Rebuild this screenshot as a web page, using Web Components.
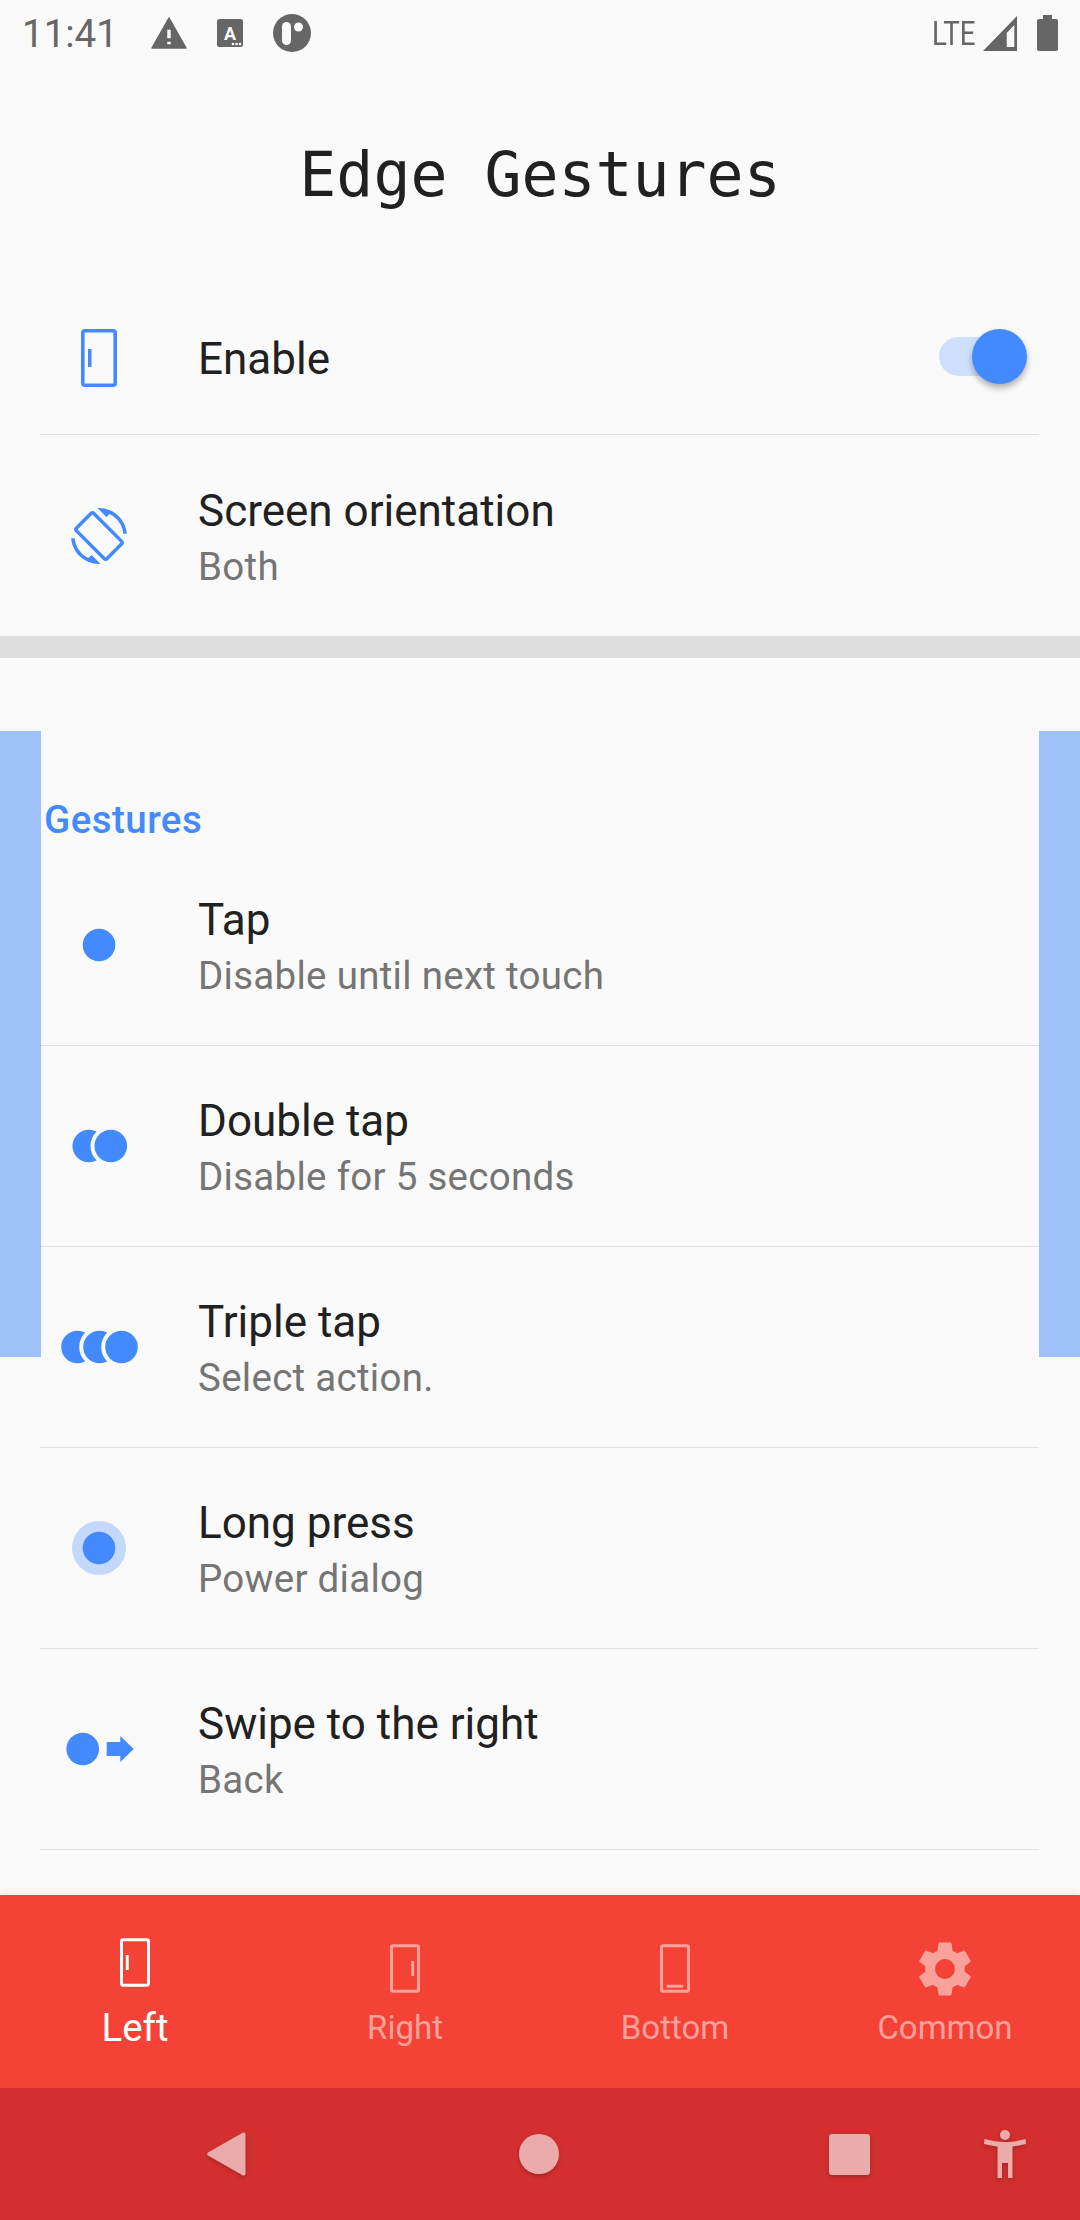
<!DOCTYPE html>
<html>
<head>
<meta charset="utf-8">
<title>Edge Gestures</title>
<style>
  html, body { margin: 0; padding: 0; }
  body {
    width: 1080px;
    height: 2220px;
    overflow: hidden;
    background: #fafafa;
    font-family: Roboto, "Liberation Sans", sans-serif;
    display: flex;
    flex-direction: column;
  }
</style>
</head>
<body>
  <status-bar></status-bar>

  <settings-page>
    <app-title>Edge Gestures</app-title>

    <setting-row label="Enable" compact divider>
      <edge-icon slot="icon" side="left"></edge-icon>
      <toggle-switch slot="trailing"></toggle-switch>
    </setting-row>
    <setting-row label="Screen orientation" summary="Both">
      <svg slot="icon" width="56" height="56" viewBox="0 0 24 24" fill="#448aff"><path d="M16.48 2.52c3.27 1.55 5.61 4.72 5.97 8.48h1.5C23.44 4.84 18.29 0 12 0l-.66.03 3.81 3.81 1.33-1.32zm-6.25-.77c-.59-.59-1.54-.59-2.12 0L1.75 8.11c-.59.59-.59 1.54 0 2.12l12.02 12.02c.59.59 1.54.59 2.12 0l6.36-6.36c.59-.59.59-1.54 0-2.12L10.23 1.75zm4.6 19.44L2.81 9.17l6.36-6.36 12.02 12.02-6.36 6.36zm-7.31.29C4.25 19.94 1.91 16.76 1.55 13H.05C.56 19.16 5.71 24 12 24l.66-.03-3.81-3.81-1.33 1.32z"/></svg>
    </setting-row>

    <section-header>Gestures</section-header>

    <setting-row label="Tap" summary="Disable until next touch" divider>
      <gesture-icon slot="icon" type="tap"></gesture-icon>
    </setting-row>
    <setting-row label="Double tap" summary="Disable for 5 seconds" divider>
      <gesture-icon slot="icon" type="double"></gesture-icon>
    </setting-row>
    <setting-row label="Triple tap" summary="Select action." divider>
      <gesture-icon slot="icon" type="triple"></gesture-icon>
    </setting-row>
    <setting-row label="Long press" summary="Power dialog" divider>
      <gesture-icon slot="icon" type="long"></gesture-icon>
    </setting-row>
    <setting-row label="Swipe to the right" summary="Back" divider>
      <gesture-icon slot="icon" type="swipe"></gesture-icon>
    </setting-row>

    <edge-strip side="left"></edge-strip>
    <edge-strip side="right"></edge-strip>
  </settings-page>

  <bottom-tabs>
    <tab-item label="Left" active><edge-icon side="left" small></edge-icon></tab-item>
    <tab-item label="Right"><edge-icon side="right" small></edge-icon></tab-item>
    <tab-item label="Bottom"><edge-icon side="bottom" small></edge-icon></tab-item>
    <tab-item label="Common">
      <svg width="66" height="66" viewBox="0 0 24 24" fill="#fff" style="margin:-8px -20px"><path d="M19.14 12.94c.04-.3.06-.61.06-.94 0-.32-.02-.64-.07-.94l2.03-1.58c.18-.14.23-.41.12-.61l-1.92-3.32c-.12-.22-.37-.29-.59-.22l-2.39.96c-.5-.38-1.03-.7-1.62-.94l-.36-2.54c-.04-.24-.24-.41-.48-.41h-3.84c-.24 0-.43.17-.47.41l-.36 2.54c-.59.24-1.13.57-1.62.94l-2.39-.96c-.22-.08-.47 0-.59.22L2.74 8.87c-.12.21-.08.47.12.61l2.03 1.58c-.05.3-.09.63-.09.94s.02.64.07.94l-2.03 1.58c-.18.14-.23.41-.12.61l1.92 3.32c.12.22.37.29.59.22l2.39-.96c.5.38 1.03.7 1.62.94l.36 2.54c.05.24.24.41.48.41h3.84c.24 0 .44-.17.47-.41l.36-2.54c.59-.24 1.13-.56 1.62-.94l2.39.96c.22.08.47 0 .59-.22l1.92-3.32c.12-.22.07-.47-.12-.61l-2.01-1.58zM12 15.6c-1.98 0-3.6-1.62-3.6-3.6s1.62-3.6 3.6-3.6 3.6 1.62 3.6 3.6-1.62 3.6-3.6 3.6z"/></svg>
    </tab-item>
  </bottom-tabs>

  <nav-bar></nav-bar>

<script>
class StatusBar extends HTMLElement {
  connectedCallback() {
    this.attachShadow({ mode: 'open' });
    this.shadowRoot.innerHTML = `
      <style>
        :host {
          display: flex;
          flex: none;
          height: 66px;
          align-items: center;
          padding: 0 22px 0 22px;
          color: #666;
          font-size: 38.5px;
        }
        .time { margin-right: 33px; }
        svg { display: block; flex: none; }
        .right { margin-left: auto; display: flex; align-items: center; }
        .lte {
          font-size: 33px;
          width: 44px;
          margin-right: 7px;
          transform: scaleX(.84);
          transform-origin: left center;
          white-space: nowrap;
        }
      </style>
      <span class="time">11:41</span>
      <svg width="36" height="32" viewBox="0 0 36 32" fill="#666" style="margin-right:30px">
        <path fill-rule="evenodd" stroke="#666" stroke-width="1.5" stroke-linejoin="round" d="M18 1 35 31H1ZM15.500 12V22H20.500V12ZM15.500 24V28H20.500V24Z"/>
      </svg>
      <svg width="26" height="28" viewBox="0 0 26 28" style="margin-right:30px">
        <rect width="26" height="28" rx="2.500" fill="#666"/>
        <text x="13" y="21" text-anchor="middle" font-family="Roboto" font-weight="700" font-size="18" fill="#fafafa">A</text>
        <circle cx="16" cy="25" r="1.300" fill="#fafafa"/><circle cx="19.500" cy="25" r="1.300" fill="#fafafa"/><circle cx="23" cy="25" r="1.300" fill="#fafafa"/>
      </svg>
      <svg width="38" height="38" viewBox="0 0 38 38">
        <circle cx="19" cy="19" r="19" fill="#666"/>
        <rect x="9" y="8" width="9" height="23" rx="4.500" fill="#fafafa"/>
        <circle cx="25.500" cy="13" r="4.500" fill="#fafafa"/>
      </svg>
      <div class="right">
        <span class="lte">LTE</span>
        <svg width="34" height="35" viewBox="0 0 34 35" fill="#666" style="margin-right:20px">
          <path fill-rule="evenodd" d="M34 0V35H0ZM23.700 17V31H31.300V9Z"/>
        </svg>
        <svg width="21" height="36" viewBox="0 0 21 36" fill="#666">
          <path d="M6 0H15V4H19Q21 4 21 6V34Q21 36 19 36H2Q0 36 0 34V6Q0 4 2 4H6Z"/>
        </svg>
      </div>
    `;
  }
}

class SettingsPage extends HTMLElement {
  connectedCallback() {
    this.attachShadow({ mode: 'open' });
    this.shadowRoot.innerHTML = `
      <style>
        :host {
          display: flex;
          flex-direction: column;
          flex: none;
          height: 1829px;
          position: relative;
          overflow: hidden;
        }
      </style>
      <slot></slot>
    `;
  }
}

class AppTitle extends HTMLElement {
  connectedCallback() {
    this.attachShadow({ mode: 'open' });
    this.shadowRoot.innerHTML = `
      <style>
        :host {
          display: flex;
          flex: none;
          height: 216px;
          justify-content: center;
          padding-top: 70px;
          box-sizing: border-box;
          font-family: "DejaVu Sans Mono", monospace;
          font-size: 61.5px;
          line-height: 78px;
          color: #212121;
        }
      </style>
      <slot></slot>
    `;
  }
}

class SettingRow extends HTMLElement {
  connectedCallback() {
    const summary = this.getAttribute('summary');
    this.attachShadow({ mode: 'open' });
    this.shadowRoot.innerHTML = `
      <style>
        :host {
          display: flex;
          flex: none;
          align-items: center;
          box-sizing: border-box;
          height: 201px;
          margin: 0 41px 0 40px;
          padding-left: 23px;
        }
        :host([compact]) { height: 153px; }
        :host([divider]) { border-bottom: 1px solid #e0e0e0; }
        .icon {
          flex: none;
          width: 72px;
          height: 72px;
          margin-right: 63px;
          display: flex;
          align-items: center;
          justify-content: center;
        }
        .text { flex: 1; padding-top: 6px; }
        :host([compact]) .text { padding-top: 1px; }
        .label { font-size: 44px; line-height: 56px; color: #212121; }
        .summary { font-size: 38.5px; line-height: 56px; color: #757575; letter-spacing: .28px; }
        ::slotted(svg) { display: block; flex: none; }
      </style>
      <div class="icon"><slot name="icon"></slot></div>
      <div class="text">
        <div class="label">${this.getAttribute('label')}</div>
        ${summary ? `<div class="summary">${summary}</div>` : ''}
      </div>
      <slot name="trailing"></slot>
    `;
  }
}

class SectionHeader extends HTMLElement {
  connectedCallback() {
    this.attachShadow({ mode: 'open' });
    this.shadowRoot.innerHTML = `
      <style>
        :host {
          display: flex;
          flex: none;
          align-items: flex-end;
          box-sizing: border-box;
          height: 209px;
          padding: 0 0 3px 44px;
          border-top: 22px solid #dedede;
          font-size: 38.5px;
          letter-spacing: .45px;
          line-height: 44px;
          font-weight: 500;
          color: #448aff;
        }
      </style>
      <slot></slot>
    `;
  }
}

class ToggleSwitch extends HTMLElement {
  connectedCallback() {
    this.attachShadow({ mode: 'open' });
    this.shadowRoot.innerHTML = `
      <style>
        :host {
          display: block;
          flex: none;
          position: relative;
          width: 71px;
          height: 39px;
          margin: 0 29px 3px 0;
          border-radius: 20px;
          background: #cfe0ff;
        }
        .thumb {
          position: absolute;
          top: -8px;
          right: -17px;
          width: 55px;
          height: 55px;
          border-radius: 50%;
          background: #448aff;
          box-shadow: 0 4px 6px rgba(0,0,0,.3);
        }
      </style>
      <div class="thumb"></div>
    `;
  }
}

class EdgeStrip extends HTMLElement {
  connectedCallback() {
    this.attachShadow({ mode: 'open' });
    this.shadowRoot.innerHTML = `
      <style>
        :host {
          position: absolute;
          top: 665px;
          left: 0;
          width: 41px;
          height: 626px;
          background: rgba(68,138,255,.5);
        }
        :host([side="right"]) { left: auto; right: 0; }
      </style>
    `;
  }
}

// phone outline with a tick on the edge it stands for
class EdgeIcon extends HTMLElement {
  connectedCallback() {
    const small = this.hasAttribute('small');
    const ticks = {
      left: '<rect x="7" y="20" width="3.500" height="18"/>',
      right: '<rect x="25.500" y="20" width="3.500" height="18"/>',
      bottom: '<rect x="8" y="48.500" width="20" height="3.500"/>'
    };
    this.attachShadow({ mode: 'open' });
    this.shadowRoot.innerHTML = `
      <style>
        :host { display: block; flex: none; color: #448aff; line-height: 0; }
        :host([small]) { color: #fff; }
      </style>
      <svg width="${small ? 30 : 36}" height="${small ? 49 : 58}" viewBox="0 0 36 58" fill="currentColor">
        <rect x="1.800" y="1.800" width="32.400" height="54.400" rx="2" fill="none" stroke="currentColor" stroke-width="3.600"/>
        ${ticks[this.getAttribute('side')]}
      </svg>
    `;
  }
}

class GestureIcon extends HTMLElement {
  connectedCallback() {
    const shapes = {
      tap: '<circle cx="36" cy="36" r="16.300"/>',
      double: `<circle cx="25.800" cy="36" r="16.300"/>
        <circle cx="47.800" cy="36" r="16.300" stroke="#fafafa" stroke-width="8" paint-order="stroke"/>`,
      triple: `<circle cx="14.500" cy="36" r="16.300"/>
        <circle cx="36.500" cy="36" r="16.300" stroke="#fafafa" stroke-width="8" paint-order="stroke"/>
        <circle cx="58.500" cy="36" r="16.300" stroke="#fafafa" stroke-width="8" paint-order="stroke"/>`,
      long: `<circle cx="36" cy="36" r="27" opacity=".3"/><circle cx="36" cy="36" r="16.300"/>`,
      swipe: `<circle cx="19.700" cy="36" r="16.300"/>
        <path d="M43.700 29H57.300V23L70.700 36 57.300 49V43H43.700Z"/>`
    };
    this.attachShadow({ mode: 'open' });
    this.shadowRoot.innerHTML = `
      <style>
        :host { display: block; flex: none; width: 72px; height: 72px; }
        svg { display: block; overflow: visible; }
      </style>
      <svg width="72" height="72" viewBox="0 0 72 72" fill="#448aff">${shapes[this.getAttribute('type')]}</svg>
    `;
  }
}

class BottomTabs extends HTMLElement {
  connectedCallback() {
    this.attachShadow({ mode: 'open' });
    this.shadowRoot.innerHTML = `
      <style>
        :host {
          display: grid;
          grid-template-columns: repeat(4, 1fr);
          flex: none;
          height: 193px;
          position: relative;
          background: #f44336;
          box-shadow: 0 -2px 8px rgba(0,0,0,.06);
        }
      </style>
      <slot></slot>
    `;
  }
}

class TabItem extends HTMLElement {
  connectedCallback() {
    this.attachShadow({ mode: 'open' });
    this.shadowRoot.innerHTML = `
      <style>
        :host {
          display: flex;
          flex-direction: column;
          align-items: center;
          box-sizing: border-box;
          padding-top: 49px;
          color: rgba(255,255,255,.5);
          font-size: 33px;
        }
        :host([active]) { padding-top: 43px; color: #fff; font-size: 38.5px; }
        .icon { height: 49px; opacity: .5; }
        :host([active]) .icon { opacity: 1; }
        .label { line-height: 48px; margin-top: 11px; }
        :host([active]) .label { margin-top: 17px; }
      </style>
      <div class="icon"><slot></slot></div>
      <div class="label">${this.getAttribute('label')}</div>
    `;
  }
}

class NavBar extends HTMLElement {
  connectedCallback() {
    this.attachShadow({ mode: 'open' });
    this.shadowRoot.innerHTML = `
      <style>
        :host {
          display: flex;
          flex: none;
          align-items: center;
          height: 132px;
          position: relative;
          padding-left: 207px;
          box-sizing: border-box;
          background: #d32f2f;
        }
        svg {
          display: block;
          flex: none;
          fill: #ebabab;
          filter: drop-shadow(0 2px 2px rgba(0,0,0,.2));
        }
      </style>
      <svg width="39" height="44" viewBox="0 0 39 44" style="margin-right:273px">
        <path d="M38.500 2.500V41.500Q38.500 44 36 43.500L1 23.500Q-.5 22 1 20.500L36 .5Q38.500 0 38.500 2.500Z"/>
      </svg>
      <svg width="40" height="40" viewBox="0 0 40 40" style="margin-right:270px"><circle cx="20" cy="20" r="20"/></svg>
      <svg width="41" height="41" viewBox="0 0 41 41" style="margin-right:114px"><rect width="41" height="41" rx="3"/></svg>
      <svg width="42" height="48" viewBox="0 0 42 48">
        <circle cx="21" cy="5" r="5"/>
        <path d="M.5 9C8 11 14 12 21 12 28 12 34 11 41.500 9L42 14C37 15 33 16 28.500 16.500V48H24V33H18V48H13.500V16.500C9 16 5 15 0 14Z"/>
      </svg>
    `;
  }
}

customElements.define('status-bar', StatusBar);
customElements.define('settings-page', SettingsPage);
customElements.define('app-title', AppTitle);
customElements.define('setting-row', SettingRow);
customElements.define('section-header', SectionHeader);
customElements.define('toggle-switch', ToggleSwitch);
customElements.define('edge-strip', EdgeStrip);
customElements.define('edge-icon', EdgeIcon);
customElements.define('gesture-icon', GestureIcon);
customElements.define('bottom-tabs', BottomTabs);
customElements.define('tab-item', TabItem);
customElements.define('nav-bar', NavBar);
</script>
</body>
</html>
